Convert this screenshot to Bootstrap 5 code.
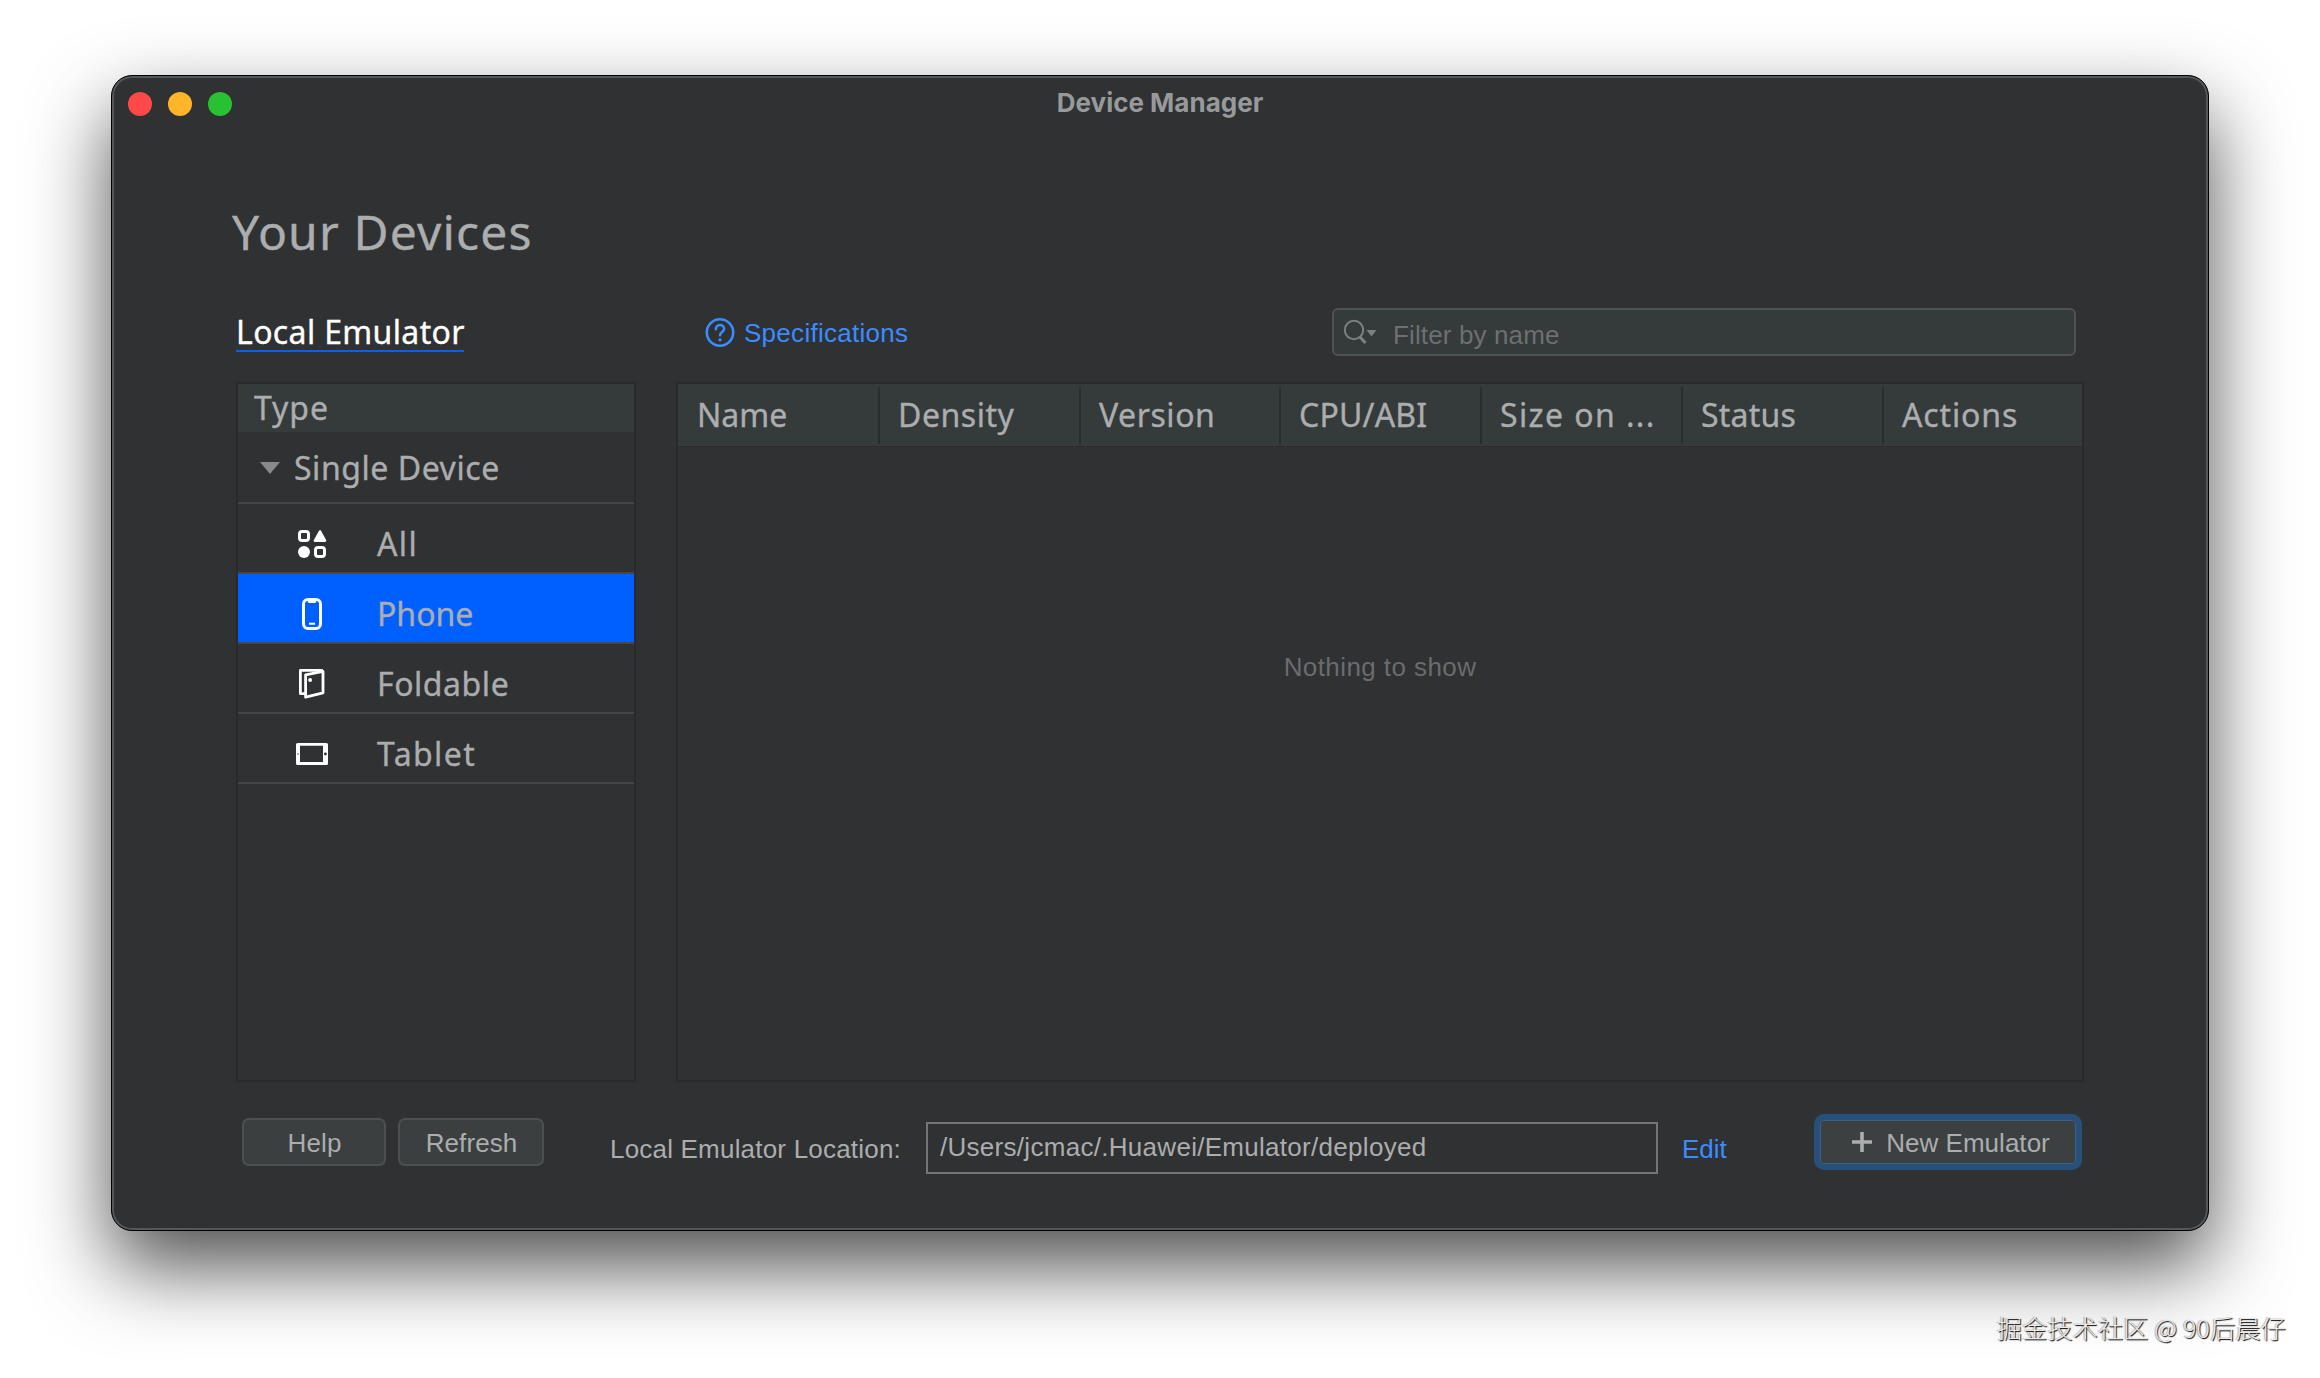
<!DOCTYPE html>
<html lang="en">
<head>
<meta charset="utf-8">
<meta name="viewport" content="width=device-width, initial-scale=1">
<title>Device Manager</title>
<link rel="stylesheet" href="https://cdn.jsdelivr.net/npm/bootstrap@5.3.0/dist/css/bootstrap.min.css">
<style>
  body { background:#fff; padding:75px 111px 0; height:1378px; overflow:hidden; color:#abadae;
         font:26px/32px "Liberation Sans", Arial, sans-serif; letter-spacing:.2px; }
  .dm-window { width:2098px; height:1156px; background:#2f3132; border:1px solid #000; border-radius:21px;
         box-shadow:inset 0 0 0 2px #55585a, 0 36px 80px rgba(0,0,0,.69); }
  .lucid { font-family:"Noto Sans", sans-serif; font-size:32px; letter-spacing:.55px; -webkit-text-stroke:.35px currentColor; }
  .ls-none { letter-spacing:0; } .ls-s { letter-spacing:.2px; } .ls-m { letter-spacing:.87px; } .ls-l { letter-spacing:1.4px; }
  .title-row { height:54px; padding-left:16px; }
  .title-text { font:700 26px/54px Inter, sans-serif; color:#98999b; letter-spacing:0; }
  .light { width:24px; height:24px; border-radius:50%; margin-top:2px; }
  .light-r { background:#ff4848; } .light-y { background:#ffb429; } .light-g { background:#28c131; }
  .lights { gap:16px; z-index:1; }
  .dm-heading { font-size:48px; line-height:64px; letter-spacing:1.15px; margin:70px 0 44px 120px; font-weight:400; }
  .tool-row { height:48px; margin:0 132px 26px 124px; }
  .tab-local { width:228px; margin-top:6px; line-height:36px; border-bottom:2px solid #0f5fe6; color:#fff; letter-spacing:.36px; }
  .blue-link { color:#3b8cff; text-decoration:none; }
  .spec-link { margin-left:241px; gap:9px; letter-spacing:.28px; height:48px; padding-top:1px; }
  .filter-box { width:744px; height:48px; border:2px solid #4d5254; border-radius:6px; background:#353a3b; padding:0 0 0 8px; }
  .filter-box input { background:none; border:0; padding:5px 0 0 15px; color:#abadae; font:inherit; letter-spacing:.13px; box-shadow:none!important; }
  .filter-box input::placeholder { color:#6c7071; opacity:1; }
  .panes { height:700px; gap:40px; margin:0 124px; }
  .pane { border:2px solid #282a2b; }
  .pane-types { width:400px; }
  .pane-devices { width:1408px; }
  .head-fill { background:#353a3b; }
  .type-head { height:48px; line-height:48px; padding-left:16px; letter-spacing:.95px; }
  .group-row { height:72px; border-bottom:2px solid #434546; padding:1px 0 0 22px; gap:14px; }
  .type-row { height:70px; border-bottom:2px solid #434546; padding:12px 0 0 58px; gap:49px; }
  .type-row.chosen { background:#0060ff; background-clip:padding-box; }
  .dev-head { display:grid; grid-template-columns:201px 201px 200px 201px 201px 201px 199px; height:62px; line-height:61px; box-shadow:0 1px 0 #2a2c2d; }
  .dev-head > div { padding-left:19px; position:relative; white-space:nowrap; }
  .dev-head > div + div::before { content:""; position:absolute; left:-1px; top:3px; bottom:2px; width:2px; background:#2a2d2e; }
  .nothing { margin-top:205px; color:#6a6c6d; letter-spacing:.42px; }
  .foot-row { margin:32px 126px 0 130px; }
  .key-btn { height:48px; margin-top:4px; border:2px solid #4b5051; border-radius:7px; background:#3b3f40; color:inherit;
         font:inherit; line-height:44px; padding:1px 0 0 1px; letter-spacing:.1px; }
  .w-help { width:144px; margin-right:12px; } .w-refresh { width:146px; margin-right:66px; }
  .loc-label { width:316px; margin-top:19px; letter-spacing:.2px; white-space:nowrap; }
  .loc-field { width:732px; height:52px; margin-top:8px; border:2px solid #747576; border-radius:0; background:none!important; color:#abadae!important;
         font:inherit; padding:0 0 2px 12px; letter-spacing:.29px; box-shadow:none!important; }
  .edit-link { margin:19px 0 0 24px; letter-spacing:0; }
  .new-btn { width:268px; height:56px; border:6px solid #27507b; border-radius:10px; background:#3c4040; color:inherit;
         font:inherit; line-height:44px; padding:1px 0 0 6px; gap:14px; letter-spacing:.03px; box-shadow:inset 0 0 0 1px #3c5f80; }
  .new-btn svg { margin-top:-1px; }
  .credit { right:34px; top:1312px; font:300 25px/30px "Noto Sans CJK SC", sans-serif; color:#e9e9e9; letter-spacing:.25px;
         text-shadow:1px 1px 1px #000, -1px 0 1px rgba(0,0,0,.3); white-space:nowrap; }
</style>
</head>
<body class="position-relative">
<main class="dm-window">
  <header class="title-row d-flex position-relative align-items-center">
    <div class="lights d-flex">
      <span class="light light-r"></span><span class="light light-y"></span><span class="light light-g"></span>
    </div>
    <div class="title-text position-absolute start-0 end-0 top-0 text-center">Device Manager</div>
  </header>

  <h1 class="dm-heading lucid">Your Devices</h1>

  <div class="tool-row d-flex align-items-start">
    <div class="tab-local lucid text-nowrap">Local Emulator</div>
    <a class="blue-link spec-link d-flex align-items-center" href="#">
      <svg width="30" height="30" viewBox="0 0 30 30" fill="none" stroke="currentColor" stroke-width="2.6" stroke-linecap="round">
        <circle cx="15" cy="14.5" r="13.2"/>
        <path d="M10.9 11.2c0-2.5 1.8-4.2 4.1-4.2s4.1 1.7 4.1 3.9c0 3-4.1 3.3-4.1 6.4"/>
        <circle cx="15" cy="21.8" r="1.6" fill="currentColor" stroke="none"/>
      </svg>
      <span>Specifications</span>
    </a>
    <div class="filter-box d-flex align-items-center ms-auto">
      <svg class="flex-shrink-0" width="36" height="30" viewBox="0 0 36 30" fill="none" stroke="#7b8082" stroke-width="2">
        <circle cx="12" cy="13" r="9.2"/>
        <path d="M18 20l5.500 6" stroke-width="3"/>
        <path d="M24.500 13h10l-5 6.500z" fill="#7b8082" stroke="none"/>
      </svg>
      <input class="form-control" type="text" placeholder="Filter by name">
    </div>
  </div>

  <div class="panes d-flex">
    <section class="pane pane-types lucid">
      <div class="type-head head-fill">Type</div>
      <div class="group-row d-flex align-items-center">
        <svg width="20" height="12" viewBox="0 0 20 12"><path d="M0 0h20L10 12z" fill="#87898a"/></svg>
        <span>Single Device</span>
      </div>
      <div class="d-flex flex-column">
        <div class="type-row d-flex align-items-center">
          <svg width="32" height="32" viewBox="0 0 32 32" fill="none" stroke="#fff" stroke-width="3">
            <rect x="3.500" y="3.500" width="9" height="9" rx="2.500"/>
            <path d="M24 3.500l5 9.200h-10z" fill="#fff" stroke-width="2.600" stroke-linejoin="round"/>
            <circle cx="8" cy="24" r="6" fill="#fff" stroke="none"/>
            <rect x="19.500" y="19.500" width="9" height="9" rx="2.500"/>
          </svg>
          <span class="ls-l">All</span>
        </div>
        <div class="type-row chosen d-flex align-items-center">
          <svg width="32" height="32" viewBox="0 0 32 32" fill="none" stroke="#fff" stroke-width="3">
            <rect x="7.500" y="1.500" width="17" height="29" rx="4.500"/>
            <path d="M11.500 2.500h9l-1 2.600h-7z" fill="#fff" stroke="none"/>
            <path d="M13 25.700h6" stroke-width="2"/>
          </svg>
          <span class="ls-none">Phone</span>
        </div>
        <div class="type-row d-flex align-items-center">
          <svg width="32" height="32" viewBox="0 0 32 32" fill="none" stroke="#fff" stroke-width="2.800" stroke-linejoin="round">
            <path d="M9.500 25.700H4.400V2.400h22.500"/>
            <path d="M9.600 6.800L27 3.400v21.400L9.600 29.200z"/>
            <circle cx="14.100" cy="12" r="2" fill="#fff" stroke="none"/>
          </svg>
          <span>Foldable</span>
        </div>
        <div class="type-row d-flex align-items-center">
          <svg width="32" height="32" viewBox="0 0 32 32">
            <path fill="#fff" fill-rule="evenodd" d="M1.500 5h29a1.500 1.500 0 0 1 1.500 1.500v19a1.500 1.500 0 0 1-1.500 1.500h-29a1.500 1.500 0 0 1-1.500-1.500v-19a1.500 1.500 0 0 1 1.500-1.500zM4 7.800v16.200h23V7.800z"/>
            <circle cx="29.400" cy="16" r="1.400" fill="#2f3132"/>
            <circle cx="2" cy="16" r=".9" fill="#8a8c8d"/>
          </svg>
          <span class="ls-l">Tablet</span>
        </div>
      </div>
    </section>

    <section class="pane pane-devices">
      <div class="dev-head head-fill lucid">
        <div class="ls-none">Name</div>
        <div>Density</div>
        <div>Version</div>
        <div class="ls-s">CPU/ABI</div>
        <div class="ls-l">Size on ...</div>
        <div class="ls-s">Status</div>
        <div class="ls-m">Actions</div>
      </div>
      <div class="nothing text-center">Nothing to show</div>
    </section>
  </div>

  <footer class="foot-row d-flex align-items-start">
    <button class="key-btn w-help" type="button">Help</button>
    <button class="key-btn w-refresh" type="button">Refresh</button>
    <label class="loc-label" for="loc">Local Emulator Location:</label>
    <input class="form-control loc-field" id="loc" type="text" value="/Users/jcmac/.Huawei/Emulator/deployed" readonly>
    <a class="blue-link edit-link" href="#">Edit</a>
    <button class="new-btn ms-auto d-flex align-items-center justify-content-center" type="button">
      <svg width="20" height="20" viewBox="0 0 20 20"><path d="M8.200 0h3.600v8.200H20v3.600h-8.200V20H8.200v-8.200H0V8.200h8.200z" fill="#abadae"/></svg>
      <span>New Emulator</span>
    </button>
  </footer>
</main>
<div class="credit position-absolute">掘金技术社区 @ 90后晨仔</div>
<script src="https://cdn.jsdelivr.net/npm/bootstrap@5.3.0/dist/js/bootstrap.bundle.min.js"></script>
</body>
</html>
